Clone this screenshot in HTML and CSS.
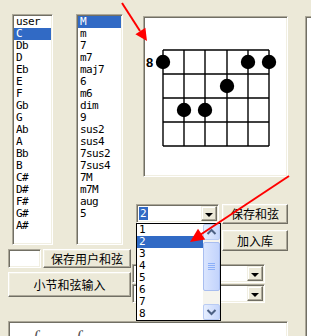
FILE: index.html
```html
<!DOCTYPE html>
<html lang="zh-CN">

<head>
    <meta charset="UTF-8">
    <title>和弦编辑</title>
    <link rel="stylesheet" href="styles.css">
</head>

<body>
    <div class="dialog">
        <div class="left-col">
            <div class="lists">
                <ul class="listbox roots">
                    <li>user</li>
                    <li class="selected">C</li>
                    <li>Db</li>
                    <li>D</li>
                    <li>Eb</li>
                    <li>E</li>
                    <li>F</li>
                    <li>Gb</li>
                    <li>G</li>
                    <li>Ab</li>
                    <li>A</li>
                    <li>Bb</li>
                    <li>B</li>
                    <li>C#</li>
                    <li>D#</li>
                    <li>F#</li>
                    <li>G#</li>
                    <li>A#</li>
                </ul>
                <ul class="listbox types">
                    <li class="selected">M</li>
                    <li>m</li>
                    <li>7</li>
                    <li>m7</li>
                    <li>maj7</li>
                    <li>6</li>
                    <li>m6</li>
                    <li>dim</li>
                    <li>9</li>
                    <li>sus2</li>
                    <li>sus4</li>
                    <li>7sus2</li>
                    <li>7sus4</li>
                    <li>7M</li>
                    <li>m7M</li>
                    <li>aug</li>
                    <li>5</li>
                </ul>
            </div>
            <div class="user-row">
                <div class="textbox"></div>
                <div class="btn save-user">保存用户和弦</div>
            </div>
            <div class="btn wide">小节和弦输入</div>
        </div>

        <div class="mid-col">
            <div class="chord-panel">
                <svg width="143" height="159" viewBox="0 0 143 159">
                    <text x="2" y="50" class="fret-no">8</text>
                    <g stroke="#000" stroke-width="1.4">
                        <line x1="19" y1="33" x2="125" y2="33" />
                        <line x1="19" y1="57" x2="125" y2="57" />
                        <line x1="19" y1="81" x2="125" y2="81" />
                        <line x1="19" y1="105" x2="125" y2="105" />
                        <line x1="19" y1="129" x2="125" y2="129" />
                        <line x1="19" y1="33" x2="19" y2="129" />
                        <line x1="40" y1="33" x2="40" y2="129" />
                        <line x1="61" y1="33" x2="61" y2="129" />
                        <line x1="83" y1="33" x2="83" y2="129" />
                        <line x1="104" y1="33" x2="104" y2="129" />
                        <line x1="125" y1="33" x2="125" y2="129" />
                    </g>
                    <g fill="#000">
                        <circle cx="19" cy="45" r="7.2" />
                        <circle cx="104" cy="45" r="7.2" />
                        <circle cx="125" cy="45" r="7.2" />
                        <circle cx="83" cy="69" r="7.2" />
                        <circle cx="40" cy="93" r="7.2" />
                        <circle cx="61" cy="93" r="7.2" />
                    </g>
                </svg>
            </div>
            <div class="combo-row">
                <div class="combo fret">
                    <span class="combo-text"><span class="hl">2</span></span>
                    <span class="drop-btn"></span>
                </div>
                <div class="btn save-chord">保存和弦</div>
            </div>
            <div class="add-row">
                <div class="btn add-lib">加入库</div>
            </div>
            <div class="combo long">
                <span class="combo-text"></span>
                <span class="drop-btn"></span>
            </div>
            <div class="combo long second">
                <span class="combo-text"></span>
                <span class="drop-btn"></span>
            </div>

            <!-- open drop-down of the fret combo -->
            <div class="drop-list">
                <ul class="drop-items">
                    <li>1</li>
                    <li class="selected">2</li>
                    <li>3</li>
                    <li>4</li>
                    <li>5</li>
                    <li>6</li>
                    <li>7</li>
                    <li>8</li>
                </ul>
                <div class="scrollbar">
                    <div class="sb-btn">
                        <svg width="15" height="14" viewBox="0 0 15 14">
                            <polyline points="3.5,9 7.5,5 11.5,9" fill="none" stroke="#4D6185" stroke-width="2" />
                        </svg>
                    </div>
                    <div class="sb-thumb">
                        <span class="grip"></span>
                        <span class="grip"></span>
                        <span class="grip"></span>
                        <span class="grip"></span>
                    </div>
                    <div class="sb-fill"></div>
                    <div class="sb-btn">
                        <svg width="15" height="14" viewBox="0 0 15 14">
                            <polyline points="3.5,5 7.5,9 11.5,5" fill="none" stroke="#4D6185" stroke-width="2" />
                        </svg>
                    </div>
                </div>
            </div>
        </div>

        <div class="right-panel"></div>

        <div class="score-panel">
            <span class="mark">ſ</span>
            <span class="mark">ſ</span>
        </div>
    </div>

    <svg class="arrows" width="311" height="336" viewBox="0 0 311 336">
        <g stroke="#FF0000" stroke-width="2" fill="#FF0000">
            <line x1="122" y1="3" x2="140" y2="31" />
            <polygon points="147,41 145.4,27.7 135.4,34.3" stroke="none" />
            <line x1="289" y1="176" x2="200" y2="235" />
            <polygon points="190,242 205.2,239.6 198,228.8" stroke="none" />
        </g>
    </svg>
</body>

</html>
```

FILE: styles.css
```css
html,
body {
    margin: 0;
    height: 336px;
    overflow: hidden;
}

body {
    background-color: #ECE9D8;
    font-family: "Noto Sans CJK SC", sans-serif;
    font-size: 12px;
    color: #000;
    position: relative;
}

.dialog {
    display: grid;
    grid-template-columns: 124px 156px 40px;
    grid-template-rows: 307px 40px;
    padding: 14px 0 0 8px;
}

/* sunken 3d edge */
.listbox,
.textbox,
.chord-panel,
.combo,
.right-panel,
.score-panel {
    box-sizing: border-box;
    background-color: #fff;
    border: 1px solid;
    border-color: #ACA899 #fff #fff #ACA899;
    box-shadow: inset 1px 1px #716F64, inset -1px -1px #F1EFE2;
}

.btn {
    box-sizing: border-box;
    display: flex;
    align-items: center;
    justify-content: center;
    background-color: #ECE9D8;
    border: 1px solid;
    border-color: #fff #716F64 #716F64 #fff;
    box-shadow: inset -1px -1px #ACA899, inset 1px 1px #F1EFE2;
    font-size: 12px;
    line-height: 1;
}

/* left column */
.left-col {
    grid-column: 1;
    grid-row: 1;
    display: flex;
    flex-direction: column;
}

.lists {
    display: flex;
    gap: 23px;
    padding-left: 4px;
}

.listbox,
.drop-items {
    list-style: none;
    margin: 0;
    font-family: "DejaVu Sans Mono", monospace;
    font-size: 11px;
    letter-spacing: -0.6px;
}

.listbox {
    height: 231px;
    padding: 1px;
}

.roots {
    width: 41px;
}

.types {
    width: 47px;
}

.listbox li,
.drop-items li {
    height: 12px;
    line-height: 12px;
    padding-left: 2px;
    white-space: nowrap;
}

.listbox li.selected,
.drop-items li.selected {
    background-color: #316AC5;
    color: #fff;
}

.user-row {
    display: flex;
    gap: 2px;
    margin-top: 4px;
}

.textbox {
    width: 33px;
    height: 19px;
}

.save-user {
    width: 88px;
    height: 19px;
}

.wide {
    margin-top: 4px;
    width: 123px;
    height: 25px;
}

/* middle column */
.mid-col {
    grid-column: 2;
    grid-row: 1;
    position: relative;
    display: flex;
    flex-direction: column;
}

.chord-panel {
    margin: 2px 0 0 11px;
    width: 145px;
    height: 161px;
}

.chord-panel svg {
    display: block;
}

.fret-no {
    font-family: "Liberation Sans", sans-serif;
    font-weight: bold;
    font-size: 13px;
}

.combo-row {
    display: flex;
    gap: 3px;
    margin-top: 27px;
    padding-left: 4px;
}

.combo {
    display: flex;
    align-items: stretch;
    padding: 1px;
    font-family: "DejaVu Sans Mono", monospace;
    font-size: 11px;
}

.fret {
    width: 83px;
    height: 19px;
}

.combo-text {
    flex: 1;
    display: flex;
    align-items: center;
    padding-left: 1px;
}

.combo-text .hl {
    background-color: #316AC5;
    color: #fff;
    padding: 0 1px;
    line-height: 13px;
}

.drop-btn {
    position: relative;
    width: 16px;
    box-sizing: border-box;
    background-color: #ECE9D8;
    border: 1px solid;
    border-color: #F1EFE2 #716F64 #716F64 #F1EFE2;
    box-shadow: inset -1px -1px #ACA899, inset 1px 1px #fff;
}

.drop-btn::after {
    content: "";
    position: absolute;
    left: 3px;
    top: 6px;
    border-left: 4px solid transparent;
    border-right: 4px solid transparent;
    border-top: 4px solid #000;
}

.save-chord {
    width: 66px;
    height: 20px;
}

.add-row {
    margin-top: 6px;
    padding-left: 90px;
}

.add-lib {
    width: 66px;
    height: 21px;
}

.long {
    width: 133px;
    height: 19px;
    margin-top: 13px;
}

.long.second {
    margin-top: 1px;
}

/* opened drop-down list */
.drop-list {
    position: absolute;
    left: 4px;
    top: 209px;
    width: 85px;
    height: 98px;
    box-sizing: border-box;
    border: 1px solid #000;
    background-color: #fff;
    display: flex;
}

.drop-items {
    flex: 1;
    padding: 0;
}

.scrollbar {
    width: 17px;
    display: flex;
    flex-direction: column;
    background-color: #F5F4EE;
}

.sb-btn {
    height: 16px;
    box-sizing: border-box;
    border: 1px solid #B9CBF3;
    border-radius: 2px;
    background: linear-gradient(to right, #E6EEFE, #C6D6FC);
    display: flex;
    align-items: center;
    justify-content: center;
}

.sb-thumb {
    height: 49px;
    margin-top: 2px;
    box-sizing: border-box;
    border: 1px solid #A9BEF0;
    border-radius: 2px;
    background: linear-gradient(to right, #DAE5FE, #C2D3FC);
    display: flex;
    flex-direction: column;
    align-items: center;
    justify-content: center;
    gap: 1px;
}

.grip {
    width: 7px;
    height: 1px;
    background-color: #8CB0F8;
}

.sb-fill {
    flex: 1;
}

/* right edge panel */
.right-panel {
    grid-column: 3;
    grid-row: 1 / 3;
    margin: 2px 0 0 17px;
    height: 340px;
}

/* score strip at the bottom */
.score-panel {
    grid-column: 1 / 3;
    grid-row: 2;
    width: 280px;
    height: 40px;
    display: flex;
    gap: 38px;
    padding: 7px 0 0 24px;
}

.mark {
    font-family: "Liberation Serif", serif;
    font-style: italic;
    font-size: 18px;
    line-height: 18px;
    color: #555;
}

.arrows {
    position: absolute;
    left: 0;
    top: 0;
    pointer-events: none;
}
```
